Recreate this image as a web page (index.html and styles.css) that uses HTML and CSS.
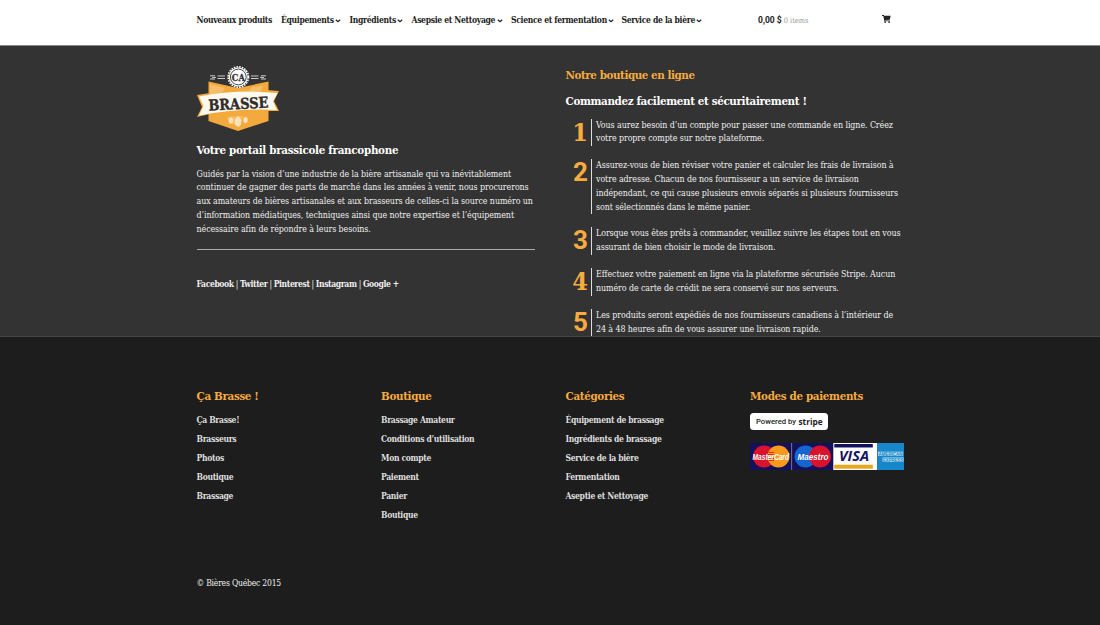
FILE: index.html
```html
<!DOCTYPE html>
<html lang="fr">
<head>
<meta charset="utf-8">
<title>Ça Brasse !</title>
<link rel="stylesheet" href="styles.css">
</head>
<body>
<header class="topbar">
  <div class="wrap topbar-inner">
    <nav class="menu">
      <a class="menu-item"><span class="t">Nouveaux produits</span></a>
      <a class="menu-item"><span class="t">Équipements</span><svg class="chev" viewBox="0 0 6 4"><path d="M.8.8 3 2.8 5.2.8"/></svg></a>
      <a class="menu-item"><span class="t">Ingrédients</span><svg class="chev" viewBox="0 0 6 4"><path d="M.8.8 3 2.8 5.2.8"/></svg></a>
      <a class="menu-item"><span class="t">Asepsie et Nettoyage</span><svg class="chev" viewBox="0 0 6 4"><path d="M.8.8 3 2.8 5.2.8"/></svg></a>
      <a class="menu-item"><span class="t">Science et fermentation</span><svg class="chev" viewBox="0 0 6 4"><path d="M.8.8 3 2.8 5.2.8"/></svg></a>
      <a class="menu-item"><span class="t">Service de la bière</span><svg class="chev" viewBox="0 0 6 4"><path d="M.8.8 3 2.8 5.2.8"/></svg></a>
    </nav>
    <div class="cart"><span class="amount">0,00 $</span><span class="count">0 items</span></div>
    <svg class="cart-icon" viewBox="0 0 9 8"><path d="M0 0H1.900L2.100.700H8.600L7.800 4.700 3.100 5.100 3.200 5.400H7.800V6.200H2.400L1.300.900H0Z"/><circle cx="3.100" cy="7.100" r=".9"/><circle cx="7.100" cy="7.100" r=".9"/></svg>
  </div>
</header>

<section class="intro">
  <div class="wrap intro-inner">
    <div class="about">
      <svg class="logo" viewBox="0 0 82 66">
        <path class="gold" d="M11.500 15.500 41 22 71.500 15.500V55L41 65 11.500 55Z"/>
        <path class="fade" d="M13 18 28 22 24 29 13 31ZM55 21 66 20 63 27 52 25ZM30 51 46 50 43 59 32 58Z"/>
        <path class="gold" d="M0 29 13 27V48L0 51 5 41ZM82 25 69 24V45L82 45 77 35Z"/>
        <path class="ribbon" d="M2 30.500Q41 23 80.500 27L76 35.500 80 44Q41 42 2 49.500L6.500 40Z"/>
        <text class="logo-name" x="11.500" y="43" textLength="60" lengthAdjust="spacingAndGlyphs" transform="rotate(-3 41 40)">BRASSE</text>
        <path class="rays" d="M13 9.800H18M13 13H18M15 11.400H19M20.500 10H28M20.500 12.500H28M54 10H61.500M54 12.500H61.500M64 9.800H69M64 13H69M63 11.400H67"/>
        <circle class="cap-edge" cx="41.300" cy="11" r="10.200"/>
        <circle class="cap" cx="41.300" cy="11" r="9.500"/>
        <circle class="cap-ring" cx="41.300" cy="11" r="7.900"/>
        <text class="logo-ca" x="34.800" y="14.600" textLength="13" lengthAdjust="spacingAndGlyphs">CA</text>
        <g class="hops"><ellipse cx="34" cy="54.500" rx="2.200" ry="3"/><ellipse cx="48.500" cy="54" rx="2.200" ry="3"/><path d="M41 50 44.500 54 44 59 41.500 61 38 59 37.500 54Z"/></g>
      </svg>
      <h3 class="title about-title"><span class="t">Votre portail brassicole francophone</span></h3>
      <p class="copy">Guidés par la vision d’une industrie de la bière artisanale qui va inévitablement<br>continuer de gagner des parts de marché dans les années à venir, nous procurerons<br>aux amateurs de bières artisanales et aux brasseurs de celles-ci la source numéro un<br>d’information médiatiques, techniques ainsi que notre expertise et l’équipement<br>nécessaire afin de répondre à leurs besoins.</p>
      <hr class="rule">
      <p class="social"><b>Facebook</b> | <b>Twitter</b> | <b>Pinterest</b> | <b>Instagram</b> | <b>Google +</b></p>
    </div>
    <div class="shop">
      <h3 class="title gold-title shop-title">Notre boutique en ligne</h3>
      <h3 class="title shop-sub">Commandez facilement et sécuritairement !</h3>
      <ol class="steps">
        <li class="step"><span class="num">1</span><p class="copy step-copy">Vous aurez besoin d’un compte pour passer une commande en ligne. Créez<br>votre propre compte sur notre plateforme.</p></li>
        <li class="step"><span class="num num-plain">2</span><p class="copy step-copy">Assurez-vous de bien réviser votre panier et calculer les frais de livraison à<br>votre adresse. Chacun de nos fournisseur a un service de livraison<br>indépendant, ce qui cause plusieurs envois séparés si plusieurs fournisseurs<br>sont sélectionnés dans le même panier.</p></li>
        <li class="step"><span class="num num-plain">3</span><p class="copy step-copy">Lorsque vous êtes prêts à commander, veuillez suivre les étapes tout en vous<br>assurant de bien choisir le mode de livraison.</p></li>
        <li class="step"><span class="num">4</span><p class="copy step-copy">Effectuez votre paiement en ligne via la plateforme sécurisée Stripe. Aucun<br>numéro de carte de crédit ne sera conservé sur nos serveurs.</p></li>
        <li class="step"><span class="num num-plain">5</span><p class="copy step-copy">Les produits seront expédiés de nos fournisseurs canadiens à l’intérieur de<br>24 à 48 heures afin de vous assurer une livraison rapide.</p></li>
      </ol>
    </div>
  </div>
</section>

<footer class="footer">
  <div class="wrap">
    <div class="columns">
      <div>
        <h3 class="title gold-title">Ça Brasse !</h3>
        <ul class="links"><li>Ça Brasse!</li><li>Brasseurs</li><li>Photos</li><li>Boutique</li><li>Brassage</li></ul>
      </div>
      <div>
        <h3 class="title gold-title">Boutique</h3>
        <ul class="links"><li>Brassage Amateur</li><li>Conditions d’utilisation</li><li>Mon compte</li><li>Paiement</li><li>Panier</li><li>Boutique</li></ul>
      </div>
      <div>
        <h3 class="title gold-title">Catégories</h3>
        <ul class="links"><li>Équipement de brassage</li><li>Ingrédients de brassage</li><li>Service de la bière</li><li>Fermentation</li><li>Aseptie et Nettoyage</li></ul>
      </div>
      <div>
        <h3 class="title gold-title">Modes de paiements</h3>
        <svg class="stripe" viewBox="0 0 78 17"><rect width="78" height="17" rx="3.500"/><text class="powered" x="6" y="11.300" textLength="40" lengthAdjust="spacingAndGlyphs">Powered by</text><text class="stripe-name" x="48.500" y="11.600" textLength="24" lengthAdjust="spacingAndGlyphs">stripe</text></svg>
        <svg class="cards" viewBox="0 0 154 27">
          <rect class="navy" width="41.500" height="27"/>
          <circle class="red" cx="14" cy="13.500" r="11"/><circle class="orange" cx="28.500" cy="13.500" r="11"/>
          <path class="stripes" d="M19 9.500H24M18 11.500H24M18 15.500H24M19 17.500H24"/>
          <text class="brand" x="2.500" y="16.500" textLength="36.500" lengthAdjust="spacingAndGlyphs">MasterCard</text>
          <rect class="sep" x="41.300" width="1" height="27"/>
          <rect class="navy" x="42.300" width="41" height="27"/>
          <circle class="blue" cx="55.500" cy="13.500" r="11"/><circle class="red" cx="70" cy="13.500" r="11"/>
          <text class="brand" x="47.500" y="16.500" textLength="31" lengthAdjust="spacingAndGlyphs">Maestro</text>
          <rect class="white" x="83.300" width="44" height="27"/>
          <rect class="navy" x="84.300" y="1" width="38.500" height="3.500"/><rect class="yellow" x="84.300" y="21.700" width="38.500" height="4"/>
          <text class="visa" x="89" y="18.400" textLength="30" lengthAdjust="spacingAndGlyphs">VISA</text>
          <rect class="amex" x="127.300" width="26.700" height="27"/>
          <rect class="amex-plate" x="128" y="8.700" width="25" height="4.300"/><rect class="amex-plate" x="132.500" y="14.500" width="21" height="4.500"/>
          <text class="amex-text" x="128.500" y="12.600" textLength="24" lengthAdjust="spacingAndGlyphs">AMERICAN</text><text class="amex-text" x="133" y="18.500" textLength="20" lengthAdjust="spacingAndGlyphs">EXPRESS</text>
        </svg>
      </div>
    </div>
    <p class="copyright">© Bières Québec 2015</p>
  </div>
</footer>
</body>
</html>
```
FILE: styles.css
```css
* { box-sizing: border-box; }
body {
  margin: 0;
  width: 1100px;
  height: 625px;
  overflow: hidden;
  display: flex;
  flex-direction: column;
  background: #1d1d1d;
  color: #efefef;
  font-family: "Roboto Slab", "DejaVu Serif Condensed", "DejaVu Serif", serif;
  font-stretch: condensed;
  font-size: 8.500px;
  white-space: nowrap;
}
h3, p, ul, ol { margin: 0; padding: 0; list-style: none; }
.wrap { padding-left: 196.500px; }

.topbar { height: 46px; flex: none; background: #fff; color: #222; border-bottom: 1px solid #888; }
.topbar-inner { display: grid; grid-template-columns: 561.500px 124px auto; }
.menu { display: grid; grid-template-columns: 84.500px 68.500px 62px 99.500px 110.500px 90px; padding-top: 12px; line-height: 14px; font-weight: 700; letter-spacing: -.31px; }
.menu-item { display: flex; align-items: center; gap: 1.500px; }
.chev { width: 6px; height: 4px; fill: none; stroke: #222; stroke-width: 1.200; margin-top: 1px; }
.cart { padding-top: 13px; line-height: 14px; }
.amount { font-family: Roboto, sans-serif; font-stretch: normal; font-weight: 700; font-size: 8.500px; }
.count { margin-left: 2px; color: #999; font-size: 7.400px; }
.cart-icon { width: 9px; height: 8px; margin-top: 15px; fill: #222; }

.intro { height: 291px; flex: none; background: #333; border-bottom: 1px solid #444; }
.intro-inner { display: grid; grid-template-columns: 369px 340px; }
.about { padding-top: 19.500px; }
.logo { display: block; width: 82px; height: 66px; overflow: visible; }
.gold { fill: #f4a93c; }
.fade { fill: #f8bd68; }
.ribbon { fill: #fffaf0; }
.logo-name { font: 700 15px "DejaVu Serif", serif; fill: #302b2b; stroke: #302b2b; stroke-width: .4; }
.rays { stroke: #ddd; stroke-width: .9; }
.cap-edge { fill: none; stroke: #fff; stroke-width: 1.600; stroke-dasharray: 1.600 1.100; }
.cap { fill: #fff; }
.cap-ring { fill: none; stroke: #333; stroke-width: .9; }
.logo-ca { font: 700 10px "DejaVu Serif", serif; fill: #333; stroke: #333; stroke-width: .3; }
.hops { fill: #fbe2b8; }

.title { font-size: 11.500px; line-height: 16px; font-weight: 700; letter-spacing: -.34px; color: #fff; }
.gold-title { color: #f8ab3f; }
.about-title { margin-top: 10px; letter-spacing: -.29px; }
.copy { font-size: 8.800px; line-height: 13.800px; letter-spacing: -.07px; }
.about .copy { margin-top: 10px; }
.rule { width: 338.500px; height: 1px; margin: 12.500px 0 0; border: 0; background: #aaa; }
.social { margin-top: 27.500px; line-height: 14px; letter-spacing: -.39px; }
.shop { padding-top: 21px; }
.shop-title { letter-spacing: -.43px; }
.shop-sub { margin-top: 10px; letter-spacing: -.36px; }
.steps { display: grid; gap: 13.100px; margin-top: 9.500px; }
.step { display: grid; grid-template-columns: 25.500px auto; }
.num { font-size: 25px; line-height: 27px; font-weight: 700; text-align: right; padding-right: 4px; color: #f8ab3f; letter-spacing: -1px; }
.num-plain { font-family: Roboto, sans-serif; font-stretch: normal; font-size: 26px; letter-spacing: 0; padding-right: 3px; }
.step-copy { border-left: 1.500px solid #ddd; padding-left: 4px; }

.footer { flex: 1; padding-top: 51px; }
.columns { display: grid; grid-template-columns: 184.500px 184.500px 184.500px 160px; height: 178.500px; }
.links { margin-top: 7px; line-height: 19px; font-weight: 700; letter-spacing: -.33px; color: #ddd; }
.stripe { display: block; width: 78px; height: 17px; margin-top: 9px; fill: #fff; }
.powered { font: 500 8px Roboto, sans-serif; fill: #222; }
.stripe-name { font: 700 9.500px "Open Sans", sans-serif; fill: #222; }
.cards { display: block; width: 154px; height: 27px; margin-top: 13px; }
.navy { fill: #13105c; }
.red { fill: #d9132b; }
.orange { fill: #f99a1c; }
.blue { fill: #1467cf; }
.white { fill: #fff; }
.yellow { fill: #e5a81f; }
.sep { fill: #8d8db0; }
.stripes { stroke: #d9132b; stroke-width: .8; }
.brand { font: italic 700 8.500px "Liberation Sans", sans-serif; fill: #fff; }
.visa { font: italic 700 14px "Open Sans", sans-serif; fill: #16135f; }
.amex { fill: #1687cb; }
.amex-plate { fill: #b9dcef; }
.amex-text { font: 700 4.500px "Liberation Sans", sans-serif; fill: #1687cb; }
.copyright { line-height: 14px; margin-top: 9px; letter-spacing: -.2px; }
```
